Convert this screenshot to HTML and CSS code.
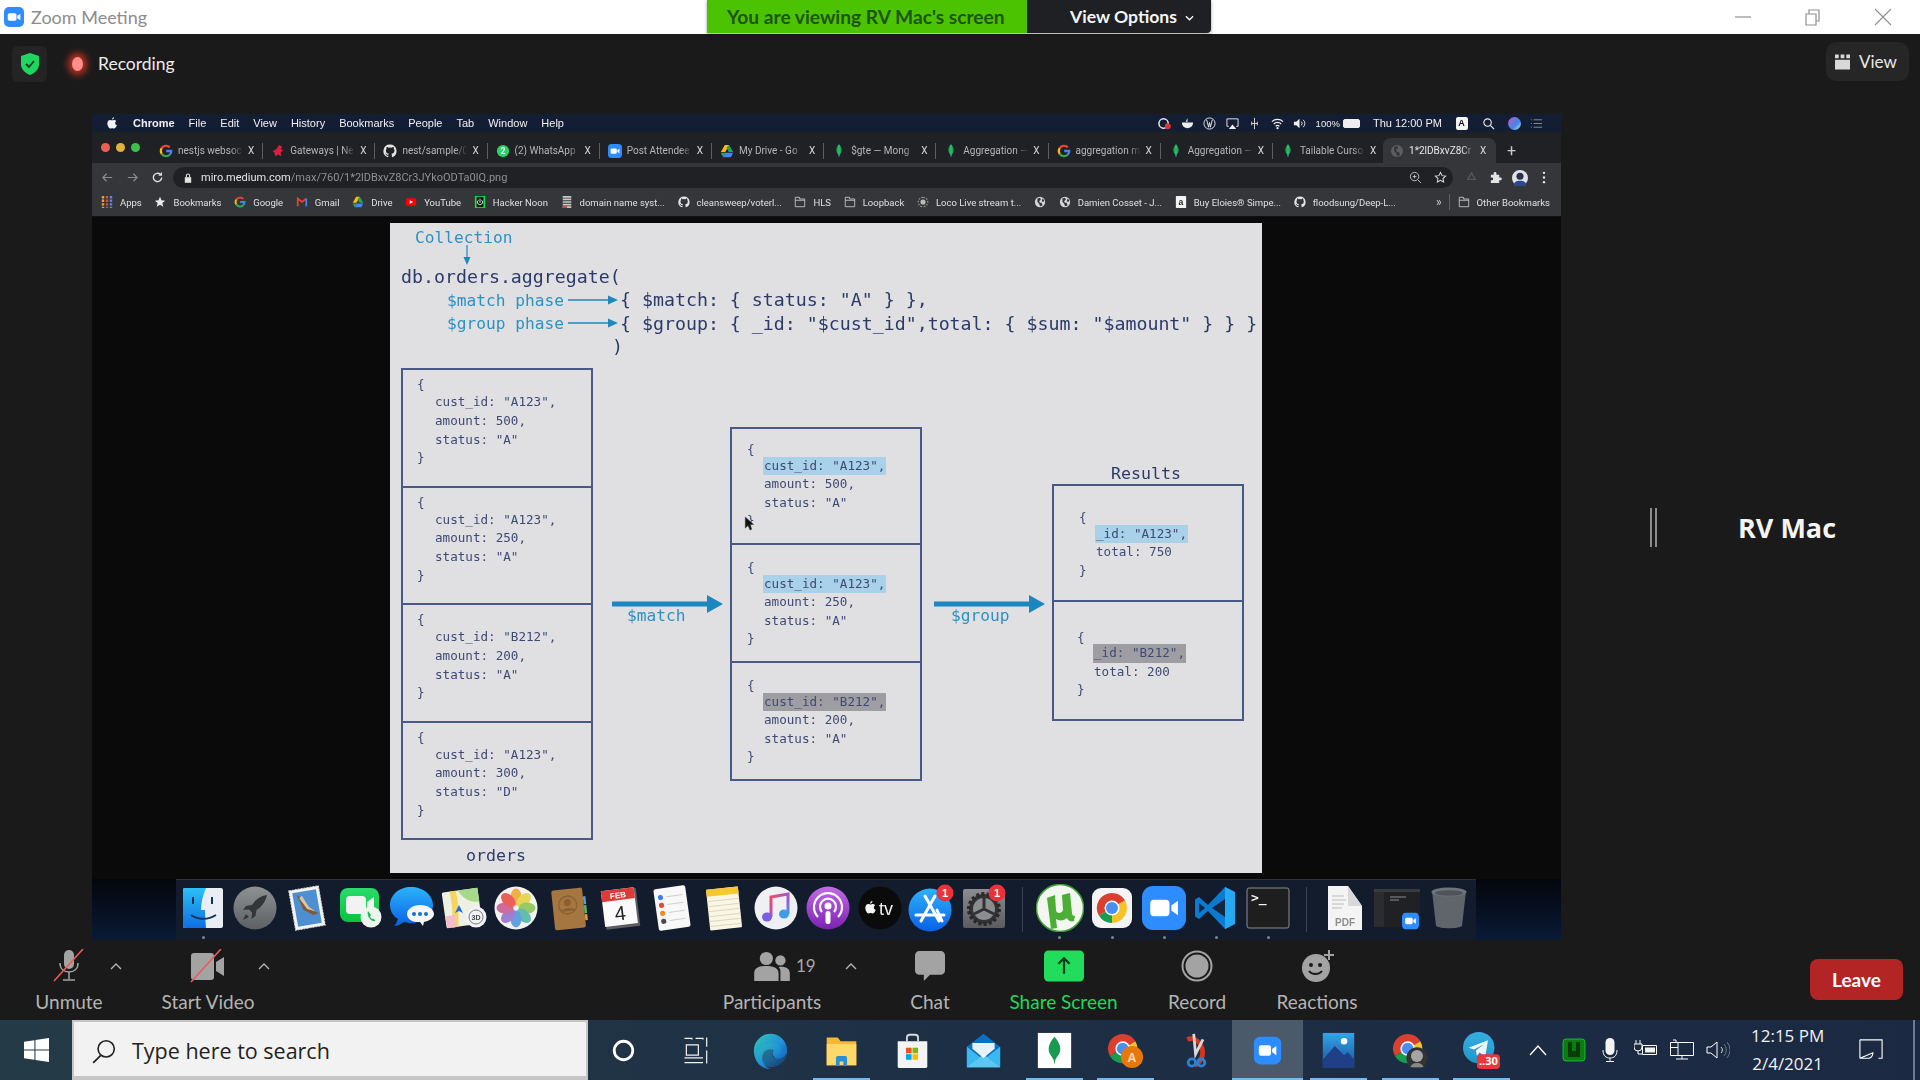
FILE: index.html
```html
<!DOCTYPE html>
<html lang="en">
<head>
<meta charset="utf-8">
<title>Zoom Meeting</title>
<link rel="stylesheet" href="styles.css">
</head>
<body>
<svg class="defs" aria-hidden="true">
  <defs>
    <linearGradient id="gFinder" x1="0" y1="0" x2="0" y2="1"><stop offset="0" stop-color="#2cc0f8"/><stop offset="1" stop-color="#0d6fe2"/></linearGradient>
    <linearGradient id="gLaunch" x1="0" y1="0" x2="0" y2="1"><stop offset="0" stop-color="#8e9293"/><stop offset="1" stop-color="#5c6062"/></linearGradient>
    <linearGradient id="gBlue" x1="0" y1="0" x2="0" y2="1"><stop offset="0" stop-color="#2cb3fb"/><stop offset="1" stop-color="#0b60e6"/></linearGradient>
    <linearGradient id="gGreen" x1="0" y1="0" x2="0" y2="1"><stop offset="0" stop-color="#28dc6a"/><stop offset="1" stop-color="#0ac240"/></linearGradient>
    <linearGradient id="gMusic" x1="0" y1="0" x2="1" y2="1"><stop offset="0" stop-color="#f4475f"/><stop offset=".6" stop-color="#a056d8"/><stop offset="1" stop-color="#3f9de8"/></linearGradient>
    <linearGradient id="gPod" x1="0" y1="0" x2="0" y2="1"><stop offset="0" stop-color="#c26be8"/><stop offset="1" stop-color="#7a22b0"/></linearGradient>
    <linearGradient id="gGrey" x1="0" y1="0" x2="0" y2="1"><stop offset="0" stop-color="#8b8d90"/><stop offset="1" stop-color="#5a5c60"/></linearGradient>
    <linearGradient id="gEdge" x1="0" y1="0" x2="1" y2="1"><stop offset="0" stop-color="#33c6b3"/><stop offset=".55" stop-color="#1f8fd8"/><stop offset="1" stop-color="#0c3f96"/></linearGradient>
    <linearGradient id="gPhoto" x1="0" y1="0" x2="0" y2="1"><stop offset="0" stop-color="#33a5e8"/><stop offset="1" stop-color="#1a4f9a"/></linearGradient>
    <linearGradient id="gTg" x1="0" y1="0" x2="0" y2="1"><stop offset="0" stop-color="#37aee2"/><stop offset="1" stop-color="#1e96c8"/></linearGradient>
    <symbol id="chrome" viewBox="0 0 48 48">
      <path d="M24 24L6.500 34A20 20 0 0 1 41.300 14Z" fill="#d9402f"/>
      <path d="M24 24L41.300 14A20 20 0 0 1 24 44Z" fill="#f5c228"/>
      <path d="M24 24L24 44A20 20 0 0 1 6.500 34Z" fill="#1a9c50"/>
      <circle cx="24" cy="24" r="10" fill="#fff"/><circle cx="24" cy="24" r="8" fill="#4a8ff0"/>
    </symbol>
    <symbol id="zoomcam" viewBox="0 0 24 24">
      <rect width="24" height="24" rx="6" fill="#2d8cff"/>
      <rect x="4.500" y="7.500" width="10.500" height="9" rx="2" fill="#fff"/><path d="M16 10.600l3.600-2.600v8l-3.600-2.600z" fill="#fff"/>
    </symbol>
    <symbol id="gfav" viewBox="0 0 16 16">
      <g fill="none" stroke-width="2.600">
        <path d="M3.100 4.800A6 6 0 0 1 12.300 3.800" stroke="#ea4335"/>
        <path d="M3.100 11.200A6 6 0 0 1 3.100 4.800" stroke="#fbbc05"/>
        <path d="M12.300 12.300A6 6 0 0 1 3.100 11.200" stroke="#34a853"/>
        <path d="M8.200 8H14A6 6 0 0 1 12.300 12.300" stroke="#4285f4"/>
      </g>
    </symbol>
    <symbol id="ghub" viewBox="0 0 16 16">
      <path fill="#e4e4e4" d="M8 .5a7.500 7.500 0 0 0-2.400 14.600c.4.100.5-.2.500-.4v-1.300c-2.100.4-2.600-1-2.600-1-.3-.9-.8-1.100-.8-1.100-.7-.5 0-.5 0-.5.800.1 1.200.8 1.200.8.700 1.200 1.800.8 2.300.6 0-.5.300-.9.500-1.100-1.700-.2-3.400-.8-3.400-3.700 0-.8.300-1.500.8-2-.1-.2-.3-1 .1-2 0 0 .6-.2 2.100.8a7 7 0 0 1 3.800 0c1.500-1 2.100-.8 2.100-.8.400 1 .2 1.800.1 2 .5.500.8 1.200.8 2 0 2.900-1.800 3.500-3.500 3.700.3.200.5.700.5 1.400v2.100c0 .2.100.5.500.4A7.500 7.500 0 0 0 8 .5z"/>
    </symbol>
    <symbol id="leaf" viewBox="0 0 16 16">
      <path fill="#13aa52" d="M8 0c2.200 3 3.400 5.200 3 8-.3 2.400-2 3.800-2.600 5L8 16l-.4-3C7 11.800 5.300 10.400 5 8 4.600 5.200 5.800 3 8 0z"/>
      <path d="M8 1v13.500" stroke="#b8c4c2" stroke-width=".5"/>
    </symbol>
    <symbol id="folder" viewBox="0 0 14 14">
      <path fill="none" stroke="#c8c9cc" stroke-width="1" d="M1.500 1.500h5v2h6v9h-11z"/><path stroke="#c8c9cc" d="M1.500 5h11"/>
    </symbol>
    <symbol id="globe" viewBox="0 0 14 14">
      <circle cx="7" cy="7" r="6" fill="#d6d7da"/><path fill="#35363a" d="M4 3l3-1 1 2-2 2 1 2 2 0 1 3-3 1-1-3-2-2zM10 3l2 2-1 2-2-1z"/>
    </symbol>
    <symbol id="caret" viewBox="0 0 12 7">
      <path d="M1 6l5-5 5 5" fill="none" stroke="#b4b4b4" stroke-width="1.400"/>
    </symbol>
  </defs>
</svg>

<header class="titlebar">
  <svg class="app-logo" viewBox="0 0 24 24"><use href="#zoomcam"/></svg>
  <span class="app-title">Zoom Meeting</span>
  <div class="banner">
    <div class="banner-msg">You are viewing RV Mac's screen</div>
    <div class="banner-opt">View Options
      <svg class="chev" viewBox="0 0 10 6"><path d="M1 1l4 4 4-4" fill="none" stroke="#fff" stroke-width="1.400"/></svg>
    </div>
  </div>
  <div class="winbtns">
    <svg class="winbtn" viewBox="0 0 20 20"><path d="M2 10h16" stroke="#8f8f8f" stroke-width="1.200"/></svg>
    <svg class="winbtn" viewBox="0 0 20 20"><path d="M3 7h10v11H3zM6 7V3h10v11h-3" fill="none" stroke="#8f8f8f" stroke-width="1.200"/></svg>
    <svg class="winbtn" viewBox="0 0 20 20"><path d="M2 2l16 16M18 2L2 18" stroke="#8f8f8f" stroke-width="1.100"/></svg>
  </div>
</header>

<main class="stage">
  <div class="stage-top">
    <div class="secure">
      <svg class="shield" viewBox="0 0 20 24"><path d="M10 1l9 3v8c0 5.500-4 9-9 11C5 21 1 17.500 1 12V4z" fill="#1fd65f"/><path d="M6 12l3 3 5-6" fill="none" stroke="#0d3a1c" stroke-width="1.800"/></svg>
    </div>
    <span class="rec-dot"></span>
    <span class="rec-label">Recording</span>
    <div class="view-btn">
      <svg class="view-ico" viewBox="0 0 16 16"><path fill="#d8d8d8" d="M0 0h4v4H0zM6 0h4v4H6zM12 0h4v4h-4zM0 5.500h16V16H0z"/></svg>
      View
    </div>
  </div>

  <div class="stage-body">
    <section class="share">
      <div class="mac-menu">
        <div class="mac-left">
          <svg class="apple" viewBox="0 0 14 16"><path fill="#f4f4f4" d="M10 0c0 1.700-1.300 3.200-3 3.200C7 1.500 8.400.2 10 0zM7 4.300c.8 0 1.600-.6 3-.6 1.100 0 2.200.5 3 1.600-2.500 1.500-2 5 .8 6-.6 1.500-2 4.500-3.600 4.500-1 0-1.500-.6-2.800-.6s-1.900.6-2.800.6C2.800 15.800.5 11.800.5 8.500.5 5.300 2.500 3.700 4.300 3.700c1.200 0 2 .6 2.700.6z"/></svg>
          <b>Chrome</b><span>File</span><span>Edit</span><span>View</span><span>History</span><span>Bookmarks</span><span>People</span><span>Tab</span><span>Window</span><span>Help</span>
        </div>
        <div class="mac-right">
          <svg class="mi" viewBox="0 0 14 14"><circle cx="6" cy="7" r="5" fill="none" stroke="#eee" stroke-width="1.600"/><circle cx="10.500" cy="10" r="3.200" fill="#e5352b"/></svg>
          <svg class="mi" viewBox="0 0 14 14"><path fill="#eee" d="M1 6h12c0 4-3 6-6 6S1 10 1 6zM7 1v4H5z"/></svg>
          <svg class="mi" viewBox="0 0 14 14"><circle cx="7" cy="7" r="6" fill="none" stroke="#eee"/><path d="M4 3l2 8 1-5 1 5 2-8" fill="none" stroke="#eee"/></svg>
          <svg class="mi" viewBox="0 0 14 14"><path fill="none" stroke="#eee" d="M3 10H1V2h12v8h-2"/><path fill="#eee" d="M7 8l4 5H3z"/></svg>
          <svg class="mi" viewBox="0 0 14 14"><path stroke="#ddd" d="M7 1v12M4 5v4M10 5v4M4 7h6"/></svg>
          <svg class="mi" viewBox="0 0 14 14"><path fill="none" stroke="#eee" stroke-width="1.300" d="M1 5a8.500 8.500 0 0 1 12 0M3 7.500a5.500 5.500 0 0 1 8 0M5 10a2.500 2.500 0 0 1 4 0"/><circle cx="7" cy="12" r="1.200" fill="#eee"/></svg>
          <svg class="mi" viewBox="0 0 14 14"><path fill="#eee" d="M1 5h2.500L7 2v10L3.500 9H1z"/><path fill="none" stroke="#eee" d="M9 5a3 3 0 0 1 0 4M11 3a6 6 0 0 1 0 8"/></svg>
          <span class="batt-pct">100%</span>
          <span class="batt"></span>
          <span class="mac-time">Thu 12:00 PM</span>
          <span class="kbd-a">A</span>
          <svg class="mi mi-gap" viewBox="0 0 14 14"><circle cx="6" cy="6" r="4" fill="none" stroke="#eee" stroke-width="1.200"/><path d="M9 9l4 4" stroke="#eee" stroke-width="1.300"/></svg>
          <span class="siri"></span>
          <svg class="mi" viewBox="0 0 14 14"><path stroke="#8a8f9c" d="M4 3h9M4 7h9M4 11h9M1 3h1M1 7h1M1 11h1"/></svg>
        </div>
      </div>

      <div class="chrome-win">
        <div class="tabstrip">
          <div class="lights"><i class="red"></i><i class="amber"></i><i class="green"></i></div>
          <div class="tab"><svg class="fav"><use href="#gfav"/></svg><span class="tab-title">nestjs websoc</span><span class="tab-x">X</span></div>
          <div class="tab"><svg class="fav" viewBox="0 0 16 16"><path fill="#d8203c" d="M9 1l4 2-2 3 3 1-3 3 1 4-4-2-3 2-1-4-2-2 4-2z"/></svg><span class="tab-title">Gateways | Ne</span><span class="tab-x">X</span></div>
          <div class="tab"><svg class="fav"><use href="#ghub"/></svg><span class="tab-title">nest/sample/0</span><span class="tab-x">X</span></div>
          <div class="tab"><svg class="fav" viewBox="0 0 16 16"><circle cx="8" cy="8" r="7" fill="#25d366"/><text x="8" y="11" class="fav-num">2</text></svg><span class="tab-title">(2) WhatsApp</span><span class="tab-x">X</span></div>
          <div class="tab"><svg class="fav" viewBox="0 0 24 24"><use href="#zoomcam"/></svg><span class="tab-title">Post Attendee</span><span class="tab-x">X</span></div>
          <div class="tab"><svg class="fav" viewBox="0 0 16 16"><path fill="#fbbc05" d="M5.500 1h5L6 9H1z"/><path fill="#34a853" d="M1 10h5l-2.500 5z"/><path fill="#4285f4" d="M6 10h9l-2.500 5h-9z"/><path fill="#1fa463" d="M10.500 1L15 9h-5L7.500 4z"/></svg><span class="tab-title">My Drive - Go</span><span class="tab-x">X</span></div>
          <div class="tab"><svg class="fav"><use href="#leaf"/></svg><span class="tab-title">$gte — Mong</span><span class="tab-x">X</span></div>
          <div class="tab"><svg class="fav"><use href="#leaf"/></svg><span class="tab-title">Aggregation —</span><span class="tab-x">X</span></div>
          <div class="tab"><svg class="fav"><use href="#gfav"/></svg><span class="tab-title">aggregation m</span><span class="tab-x">X</span></div>
          <div class="tab"><svg class="fav"><use href="#leaf"/></svg><span class="tab-title">Aggregation —</span><span class="tab-x">X</span></div>
          <div class="tab"><svg class="fav"><use href="#leaf"/></svg><span class="tab-title">Tailable Curso</span><span class="tab-x">X</span></div>
          <div class="tab tab-active"><svg class="fav" viewBox="0 0 14 14"><circle cx="7" cy="7" r="6" fill="#5c5d61"/><path fill="#35363a" d="M4 3l3-1 1 2-2 2 1 2 2 0 1 3-3 1-1-3-2-2z"/></svg><span class="tab-title">1*2lDBxvZ8Cr</span><span class="tab-x">X</span></div>
          <span class="tab-plus">+</span>
        </div>
        <div class="toolbar-c">
          <svg class="nav" viewBox="0 0 14 14"><path d="M12 7H2M6 3L2 7l4 4" fill="none" stroke="#8a8b8f" stroke-width="1.300"/></svg>
          <svg class="nav" viewBox="0 0 14 14"><path d="M2 7h10M8 3l4 4-4 4" fill="none" stroke="#8a8b8f" stroke-width="1.300"/></svg>
          <svg class="nav" viewBox="0 0 14 14"><path d="M11.500 7a4.500 4.500 0 1 1-1.300-3.200" fill="none" stroke="#dfe0e2" stroke-width="1.500"/><path d="M11.800 1v4h-4z" fill="#dfe0e2"/></svg>
          <div class="omnibox">
            <svg class="lock" viewBox="0 0 10 12"><path fill="#e4e4e4" d="M1 5h8v7H1z"/><path fill="none" stroke="#e4e4e4" stroke-width="1.300" d="M3 5V3a2 2 0 0 1 4 0v2"/></svg>
            <span class="url"><b>miro.medium.com</b>/max/760/1*2lDBxvZ8Cr3JYkoODTa0lQ.png</span>
            <svg class="nav omni-zoom" viewBox="0 0 14 14"><circle cx="6" cy="6" r="4.500" fill="none" stroke="#c6c7ca"/><path d="M9.500 9.500l3.500 3.500M4 6h4M6 4v4" stroke="#c6c7ca"/></svg>
            <svg class="nav" viewBox="0 0 14 14"><path d="M7 1.500l1.700 3.500 3.800.5-2.800 2.600.7 3.800L7 10l-3.400 1.900.7-3.800L1.500 5.500 5.300 5z" fill="none" stroke="#d6d7da" stroke-width="1.100"/></svg>
          </div>
          <svg class="nav ext-dim" viewBox="0 0 14 14"><path d="M7 2l4 7H3z" fill="none" stroke="#55565a" stroke-width="1.500"/></svg>
          <svg class="nav" viewBox="0 0 14 14"><path fill="#e4e4e4" d="M2 4h3V2.500a1.500 1.500 0 0 1 3 0V4h3v3h1.300a1.500 1.500 0 0 1 0 3H11v3H2v-3h1a1.500 1.500 0 0 0 0-3H2z"/></svg>
          <svg class="avatar" viewBox="0 0 18 18"><circle cx="9" cy="9" r="9" fill="#dde3ea"/><circle cx="9" cy="7" r="4" fill="#2c2f45"/><path fill="#2b4a8e" d="M2 18c0-5 3-6 7-6s7 1 7 6z"/></svg>
          <svg class="dots" viewBox="0 0 4 14"><circle cx="2" cy="2" r="1.300" fill="#e4e4e4"/><circle cx="2" cy="7" r="1.300" fill="#e4e4e4"/><circle cx="2" cy="12" r="1.300" fill="#e4e4e4"/></svg>
        </div>
        <div class="bookmarks">
          <span class="bm"><svg class="bm-ico" viewBox="0 0 12 12"><path stroke-width="2.400" stroke-dasharray="2.400 1.200" fill="none" stroke="#e8a23a" d="M2 0v12"/><path stroke-width="2.400" stroke-dasharray="2.400 1.200" fill="none" stroke="#dd4b39" d="M6 0v12"/><path stroke-width="2.400" stroke-dasharray="2.400 1.200" fill="none" stroke="#4a8cf0" d="M10 0v12"/></svg>Apps</span>
          <span class="bm"><svg class="bm-ico" viewBox="0 0 14 14"><path fill="#e8e8e8" d="M7 1l1.800 4 4.200.4-3.200 2.800 1 4.300L7 10.300l-3.800 2.200 1-4.300L1 5.400 5.200 5z"/></svg>Bookmarks</span>
          <span class="bm"><svg class="bm-ico"><use href="#gfav"/></svg>Google</span>
          <span class="bm"><svg class="bm-ico" viewBox="0 0 14 14"><path fill="none" stroke="#ea4335" stroke-width="2" d="M2 12V3l5 4 5-4"/><path fill="none" stroke="#4285f4" stroke-width="2" d="M12 3v9"/></svg>Gmail</span>
          <span class="bm"><svg class="bm-ico" viewBox="0 0 16 16"><path fill="#fbbc05" d="M5.500 1h5L6 9H1z"/><path fill="#34a853" d="M1 10h5l-2.500 5z"/><path fill="#4285f4" d="M6 10h9l-2.500 5h-9z"/><path fill="#1fa463" d="M10.500 1L15 9h-5L7.500 4z"/></svg>Drive</span>
          <span class="bm"><svg class="bm-ico" viewBox="0 0 14 14"><rect x="1" y="2.500" width="12" height="9" rx="2" fill="#f00"/><path fill="#fff" d="M5.500 5l4 2-4 2z"/></svg>YouTube</span>
          <span class="bm"><svg class="bm-ico" viewBox="0 0 12 14"><rect width="12" height="14" fill="#16e34a"/><rect x="2" y="1" width="8" height="12" fill="#111"/><path d="M6 3v5M4 5a3 3 0 1 0 4 0" fill="none" stroke="#fff"/></svg>Hacker Noon</span>
          <span class="bm"><svg class="bm-ico" viewBox="0 0 12 14"><path d="M1 1h10M1 4h10M1 7h10M1 10h10M1 13h10" stroke="#c9c9c9" stroke-width="2"/><path d="M1 13h5" stroke="#e33" stroke-width="2"/></svg>domain name syst...</span>
          <span class="bm"><svg class="bm-ico"><use href="#ghub"/></svg>cleansweep/voterl...</span>
          <span class="bm"><svg class="bm-ico"><use href="#folder"/></svg>HLS</span>
          <span class="bm"><svg class="bm-ico"><use href="#folder"/></svg>Loopback</span>
          <span class="bm"><svg class="bm-ico" viewBox="0 0 14 14"><circle cx="7" cy="7" r="3" fill="#b9bcb5"/><path stroke="#8e918a" stroke-width="1.500" stroke-dasharray="2 1.500" fill="none" d="M7 1.500a5.500 5.500 0 1 0 .01 0"/></svg>Loco Live stream t...</span>
          <span class="bm"><svg class="bm-ico"><use href="#globe"/></svg></span>
          <span class="bm"><svg class="bm-ico"><use href="#globe"/></svg>Damien Cosset - J...</span>
          <span class="bm"><svg class="bm-ico" viewBox="0 0 12 14"><rect width="12" height="14" rx="1" fill="#f4f4f4"/><text x="6" y="10" class="fav-a">a</text></svg>Buy Eloies® Simpe...</span>
          <span class="bm"><svg class="bm-ico"><use href="#ghub"/></svg>floodsung/Deep-L...</span>
          <div class="bm-end">
            <span class="bm-more">»</span>
            <span class="bm"><svg class="bm-ico"><use href="#folder"/></svg>Other Bookmarks</span>
          </div>
        </div>
      </div>

      <div class="viewport">
        <div class="sheet">
          <div class="collection">Collection</div>
          <svg class="col-arrow" viewBox="0 0 10 20"><path d="M5 0v14" stroke="#1e88bb" stroke-width="1.200"/><path d="M1.500 12h7L5 20z" fill="#1e88bb"/></svg>
          <div class="code">
            <div class="code-row">db.orders.aggregate(</div>
            <div class="code-row"><span class="phase">$match phase</span><svg class="phase-arrow" viewBox="0 0 50 10"><path d="M0 5h42" stroke="#1e88bb" stroke-width="1.400"/><path d="M40 .5L50 5 40 9.500z" fill="#1e88bb"/></svg><span class="stage-code">{ $match: { status: "A" } },</span></div>
            <div class="code-row"><span class="phase">$group phase</span><svg class="phase-arrow" viewBox="0 0 50 10"><path d="M0 5h42" stroke="#1e88bb" stroke-width="1.400"/><path d="M40 .5L50 5 40 9.500z" fill="#1e88bb"/></svg><span class="stage-code">{ $group: { _id: "$cust_id",total: { $sum: "$amount" } } }</span></div>
            <div class="code-row code-close">)</div>
          </div>

          <div class="col col-orders">
            <div class="doc"><div>{</div><div class="kv">cust_id: "A123",</div><div class="kv">amount: 500,</div><div class="kv">status: "A"</div><div>}</div></div>
            <div class="doc"><div>{</div><div class="kv">cust_id: "A123",</div><div class="kv">amount: 250,</div><div class="kv">status: "A"</div><div>}</div></div>
            <div class="doc"><div>{</div><div class="kv">cust_id: "B212",</div><div class="kv">amount: 200,</div><div class="kv">status: "A"</div><div>}</div></div>
            <div class="doc"><div>{</div><div class="kv">cust_id: "A123",</div><div class="kv">amount: 300,</div><div class="kv">status: "D"</div><div>}</div></div>
          </div>
          <div class="caption caption-orders">orders</div>

          <svg class="flow-arrow flow-match" viewBox="0 0 111 18"><path d="M0 6.500h96v5H0z" fill="#1b86bf"/><path d="M95 0l16 9-16 9z" fill="#1b86bf"/></svg>
          <div class="flow-label flow-label-match">$match</div>

          <div class="col col-matched">
            <div class="doc"><div>{</div><div class="kv"><span class="hl">cust_id: "A123",</span></div><div class="kv">amount: 500,</div><div class="kv">status: "A"</div><div>}</div></div>
            <div class="doc doc-mid"><div>{</div><div class="kv"><span class="hl">cust_id: "A123",</span></div><div class="kv">amount: 250,</div><div class="kv">status: "A"</div><div>}</div></div>
            <div class="doc"><div>{</div><div class="kv"><span class="hl hl-grey">cust_id: "B212",</span></div><div class="kv">amount: 200,</div><div class="kv">status: "A"</div><div>}</div></div>
          </div>
          <svg class="cursor" viewBox="0 0 10 16"><path d="M1 1v12l3-3 2 5 2-1-2-5h4z" fill="#111" stroke="#444" stroke-width=".5"/></svg>

          <svg class="flow-arrow flow-group" viewBox="0 0 111 18"><path d="M0 6.500h96v5H0z" fill="#1b86bf"/><path d="M95 0l16 9-16 9z" fill="#1b86bf"/></svg>
          <div class="flow-label flow-label-group">$group</div>

          <div class="caption caption-results">Results</div>
          <div class="col col-results">
            <div class="doc"><div>{</div><div class="kv"><span class="hl">_id: "A123",</span></div><div class="kv">total: 750</div><div>}</div></div>
            <div class="doc doc-shift"><div>{</div><div class="kv"><span class="hl hl-grey">_id: "B212",</span></div><div class="kv">total: 200</div><div>}</div></div>
          </div>
        </div>
      </div>

      <div class="dock-row">
        <div class="dock">
          <div class="slot"><svg class="di" viewBox="0 0 48 48"><rect x="4" y="4" width="40" height="40" rx="2" fill="#e8eef4"/><path d="M6 4h21c-3 7-5 14-5 22h4c0 6 .5 12 1 18H6a2 2 0 0 1-2-2V6a2 2 0 0 1 2-2z" fill="url(#gFinder)"/><path d="M14 13v7M33 13v7" stroke="#10335a" stroke-width="2"/><path d="M12 31c7 5 17 5 25 0" fill="none" stroke="#10335a" stroke-width="1.800"/></svg><i class="run"></i></div>
          <div class="slot"><svg class="di" viewBox="0 0 48 48"><circle cx="24" cy="24" r="21.500" fill="url(#gLaunch)"/><path d="M36 11c-7 1-12 5-15 10l-6 1-3 4 6-.5 3 3L20.500 35l4-3 1-6c5-3 9-8 10.500-15z" fill="#333639"/><path d="M15 30l-3 6 6-3z" fill="#333639"/></svg></div>
          <div class="slot"><svg class="di" viewBox="0 0 48 48"><g transform="rotate(-10 24 24)"><rect x="9" y="4" width="30" height="40" fill="#f4f4f4" stroke="#ddd" stroke-dasharray="2 1"/><rect x="12" y="7" width="24" height="34" fill="#4d8fd1"/><path d="M16 10l5 3 4 9 9 9-5 1-9-7-2-9z" fill="#7d5a3c"/><path d="M18 13l3-2 5 12 6 6-8-4z" fill="#d9c5a8"/></g></svg></div>
          <div class="slot"><svg class="di" viewBox="0 0 48 48"><rect x="5" y="4" width="39" height="34" rx="8" fill="url(#gGreen)"/><rect x="11" y="12" width="20" height="18" rx="4" fill="#f2f2f2"/><path d="M32 18l7-5v16l-7-5z" fill="#f2f2f2"/><circle cx="36" cy="33" r="10.500" fill="#eef3ee"/><path d="M33 27c-1 2 0 6 2 8s4 3 5.500 1.500l-2.500-2-1 .8c-1-.8-2-2.300-2-3.300l1-.8z" fill="#15b94c"/></svg></div>
          <div class="slot"><svg class="di" viewBox="0 0 48 48"><path d="M24 3C12 3 3 11 3 21c0 6 3 11 8 14-1 3-2 5-4 7 4 0 7-2 10-4 2 .5 5 1 7 1 12 0 22-8 22-18S36 3 24 3z" fill="url(#gBlue)"/><path d="M33 21c-7 0-13 4-13 9 0 4 4 8 10 8l3 0 3 4 1-4c5-1 10-4 10-8 0-5-6-9-14-9z" fill="#f4f6f8"/><circle cx="27" cy="30" r="2" fill="#1b6fd0"/><circle cx="33" cy="30" r="2" fill="#1b6fd0"/><circle cx="39" cy="30" r="2" fill="#1b6fd0"/></svg></div>
          <div class="slot"><svg class="di" viewBox="0 0 48 48"><g transform="rotate(-8 22 24)"><rect x="4" y="6" width="36" height="36" rx="1.500" fill="#eef0e4"/><path d="M20 6h20v14C30 20 24 14 20 6z" fill="#a7d98a"/><path d="M12 6h6c2 10 0 20-2 36h-6c2-12 3-24 2-36z" fill="#f6d55c"/><path d="M4 30h10v12H5z" fill="#f4bcc8"/><path d="M30 30h10v12H26z" fill="#bfe3f0"/></g><path d="M15 29l4-8 4 8-4-2z" fill="#1d6de0"/><circle cx="36" cy="33" r="10.500" fill="#f1f2f3"/><circle cx="36" cy="33" r="7" fill="none" stroke="#77797c"/><text x="36" y="36" class="dock-3d">3D</text></svg></div>
          <div class="slot"><svg class="di" viewBox="0 0 48 48"><circle cx="24" cy="24" r="21.500" fill="#f2f2f2"/><g opacity=".85"><ellipse cx="24" cy="13" rx="5.500" ry="8.500" fill="#f2a32c"/><ellipse cx="24" cy="13" rx="5.500" ry="8.500" fill="#e4d23a" transform="rotate(45 24 24)"/><ellipse cx="24" cy="13" rx="5.500" ry="8.500" fill="#88c44d" transform="rotate(90 24 24)"/><ellipse cx="24" cy="13" rx="5.500" ry="8.500" fill="#49b3a5" transform="rotate(135 24 24)"/><ellipse cx="24" cy="13" rx="5.500" ry="8.500" fill="#4b92dd" transform="rotate(180 24 24)"/><ellipse cx="24" cy="13" rx="5.500" ry="8.500" fill="#8e6dc9" transform="rotate(225 24 24)"/><ellipse cx="24" cy="13" rx="5.500" ry="8.500" fill="#c8548e" transform="rotate(270 24 24)"/><ellipse cx="24" cy="13" rx="5.500" ry="8.500" fill="#e8463f" transform="rotate(315 24 24)"/></g></svg></div>
          <div class="slot"><svg class="di" viewBox="0 0 48 48"><g transform="rotate(-6 24 24)"><rect x="9" y="5" width="31" height="40" rx="2" fill="#a5763f"/><rect x="40" y="14" width="2.500" height="8" fill="#5aa0d8"/><rect x="40" y="23" width="2.500" height="8" fill="#5ab56a"/><rect x="40" y="32" width="2.500" height="6" fill="#e0a03a"/><circle cx="24" cy="21" r="9" fill="none" stroke="#8a6030" stroke-width="1.300"/><circle cx="24" cy="18.500" r="3.500" fill="#8a6030"/><path d="M17 27c2-4 12-4 14 0" fill="#8a6030"/></g></svg></div>
          <div class="slot"><svg class="di" viewBox="0 0 48 48"><g transform="rotate(-7 24 24)"><rect x="8" y="6" width="34" height="38" fill="#5b5d62"/><rect x="7" y="5" width="33" height="36" fill="#fafafa"/><rect x="7" y="5" width="33" height="11" fill="#dd3b38"/><text x="23.500" y="14" class="dock-feb">FEB</text><text x="23.500" y="36" class="dock-day">4</text></g></svg></div>
          <div class="slot"><svg class="di" viewBox="0 0 48 48"><g transform="rotate(-8 24 24)"><rect x="8" y="3" width="32" height="42" rx="2" fill="#f8f8f8"/><circle cx="14" cy="12" r="2.600" fill="#3b7fe6"/><circle cx="14" cy="20" r="2.600" fill="#e9433b"/><circle cx="14" cy="28" r="2.600" fill="#ee8a2a"/><circle cx="14" cy="36" r="2.600" fill="#4a4a4c"/><path d="M20 12h16M20 20h16M20 28h16M20 36h16" stroke="#cfcfcf"/></g></svg></div>
          <div class="slot"><svg class="di" viewBox="0 0 48 48"><g transform="rotate(-6 24 24)"><rect x="8" y="4" width="32" height="41" rx="1" fill="#faf6e4"/><rect x="8" y="4" width="32" height="7" fill="#f6c82f"/><path d="M8 16h32M8 21h32M8 26h32M8 31h32M8 36h32M8 41h32" stroke="#dad6c2"/></g></svg></div>
          <div class="slot"><svg class="di" viewBox="0 0 48 48"><circle cx="24" cy="24" r="21.500" fill="#eff0f2"/><path d="M19 33V13l17-3v20" fill="none" stroke="url(#gMusic)" stroke-width="3"/><ellipse cx="15" cy="33" rx="5" ry="4.500" fill="#7a5fe0"/><ellipse cx="32" cy="30" rx="5" ry="4.500" fill="#3f9de8"/></svg></div>
          <div class="slot"><svg class="di" viewBox="0 0 48 48"><circle cx="24" cy="24" r="21.500" fill="url(#gPod)"/><path d="M14 33a14 14 0 1 1 20 0M18 28a8 8 0 1 1 12 0" fill="none" stroke="#fff" stroke-width="2.200"/><circle cx="24" cy="22" r="3.500" fill="#fff"/><rect x="21.500" y="27" width="5" height="13" rx="2.500" fill="#fff"/></svg></div>
          <div class="slot"><svg class="di" viewBox="0 0 48 48"><circle cx="24" cy="24" r="21.500" fill="#0b0b0c"/><path transform="translate(2 -1)" fill="#f4f4f4" d="M14.500 18c0 1.400-1 2.600-2.400 2.600 0-1.400 1-2.500 2.400-2.600zM12.500 21.500c.6 0 1.200-.5 2.300-.5.900 0 1.700.4 2.300 1.200-1.900 1.200-1.500 3.900.6 4.700-.5 1.200-1.500 3.500-2.800 3.500-.8 0-1.200-.5-2.200-.5s-1.400.5-2.200.5c-1.500 0-3.200-3.200-3.200-5.700 0-2.500 1.500-3.800 3-3.800.9 0 1.600.6 2.200.6z"/><text x="23" y="31" class="dock-tv">tv</text></svg></div>
          <div class="slot"><svg class="di" viewBox="0 0 48 48"><circle cx="22" cy="26" r="21.500" fill="url(#gBlue)"/><path d="M13 37l14-25M31 37L17 12M8 31h28M29 26l5 11" stroke="#fff" stroke-width="3" stroke-linecap="round" fill="none"/><circle cx="37" cy="9" r="8.500" fill="#e8333a"/><text x="37" y="13" class="dock-badge">1</text></svg></div>
          <div class="slot"><svg class="di" viewBox="0 0 48 48"><rect x="3" y="5" width="42" height="39" rx="2" fill="url(#gGrey)"/><circle cx="24" cy="25" r="15" fill="#333" stroke="#2a2a2a" stroke-width="4" stroke-dasharray="3 2.200"/><circle cx="24" cy="25" r="11" fill="#8b8d90"/><path d="M24 25V14M24 25l-10 5M24 25l10 5" stroke="#333" stroke-width="3"/><circle cx="37" cy="9" r="8.500" fill="#e8333a"/><text x="37" y="13" class="dock-badge">1</text></svg></div>
          <span class="dock-sep"></span>
          <div class="slot"><svg class="di" viewBox="0 0 48 48"><circle cx="24" cy="24" r="23.500" fill="#f3f7ef" stroke="#3f9e35" stroke-width="1.500"/><path d="M11 14l8-3 1 15c0 4 6 4 7 0l-1-15 8-2 2 20c0 2 1 3 3 3l-1 5c-3 1-6 0-7-3-3 3-8 3-11 1l1 9-6 1z" fill="#4cae35"/></svg><i class="run"></i></div>
          <div class="slot"><svg class="di" viewBox="0 0 48 48"><rect x="4" y="4" width="40" height="40" rx="9" fill="#f4f4f4"/><use href="#chrome" x="6" y="6" width="36" height="36"/></svg><i class="run"></i></div>
          <div class="slot"><svg class="di" viewBox="0 0 24 24"><use href="#zoomcam" x="1" y="1" width="22" height="22"/></svg><i class="run"></i></div>
          <div class="slot"><svg class="di" viewBox="0 0 48 48"><path d="M33 3L16 21 7 13l-4 2.500v17L7 35l9-8 17 18 10-5V8z" fill="#0b7ad1"/><path d="M33 3l10 5v32l-10 5z" fill="#24a9f2"/><path d="M33 15v18l-13-9z" fill="#13283f"/><path d="M7 19l6 5-6 5z" fill="#13283f"/></svg><i class="run"></i></div>
          <div class="slot"><svg class="di" viewBox="0 0 48 48"><rect x="3" y="4" width="42" height="40" rx="2" fill="#1e1e1e" stroke="#8a8c90"/><text x="7" y="18" class="dock-term">&gt;_</text></svg><i class="run"></i></div>
          <span class="dock-sep dock-sep-b"></span>
          <div class="slot"><svg class="di" viewBox="0 0 48 48"><path d="M8 2h20l14 20v24H8z" fill="#f4f4f4"/><path d="M28 2l14 20H28z" fill="#d8d8d8"/><path d="M12 12h12M12 16h14M12 20h12M12 24h10" stroke="#bbb"/><text x="25" y="42" class="dock-pdf">PDF</text></svg></div>
          <div class="slot"><svg class="di" viewBox="0 0 48 48"><rect x="1" y="5" width="46" height="38" fill="#202124"/><rect x="1" y="5" width="46" height="3" fill="#3a3b3f"/><path d="M17 13h16M17 16h9" stroke="#8e8f93"/><rect x="1" y="8" width="10" height="35" fill="#2b2c30"/><svg x="29" y="28" width="17" height="18" viewBox="0 0 24 24"><use href="#zoomcam"/></svg></svg></div>
          <div class="slot"><svg class="di" viewBox="0 0 48 48"><path d="M7 7h34l-4 35c-4 3-22 3-26 0z" fill="#5f656a"/><ellipse cx="24" cy="8" rx="17.500" ry="4.500" fill="#6f757a"/><ellipse cx="24" cy="9" rx="14" ry="2.800" fill="#4e5459"/></svg></div>
        </div>
      </div>
    </section>

    <aside class="speaker">
      <span class="speaker-bar"></span>
      <span class="speaker-name">RV Mac</span>
    </aside>
  </div>
</main>

<nav class="controls">
  <div class="ctl ctl-unmute">
    <svg class="ctl-ico" viewBox="0 0 36 34"><rect x="13" y="1" width="10" height="19" rx="5" fill="#a3a3a3"/><path d="M9 14c0 6 4 9 9 9s9-3 9-9M18 23v7M12 31h12" fill="none" stroke="#a3a3a3" stroke-width="1.500"/><path d="M3 32L32 0" stroke="#ec5a5a" stroke-width="1.600"/></svg>
    <span>Unmute</span>
  </div>
  <svg class="caret"><use href="#caret"/></svg>
  <div class="ctl ctl-video">
    <svg class="ctl-ico" viewBox="0 0 40 34"><path fill="#a3a3a3" d="M3 7a3 3 0 0 1 3-3h17a3 3 0 0 1 3 3v21a3 3 0 0 1-3 3H6a3 3 0 0 1-3-3zM28 13l8-5v19l-8-5z"/><path d="M3 33L33 0" stroke="#ec5a5a" stroke-width="1.600"/></svg>
    <span>Start Video</span>
  </div>
  <svg class="caret"><use href="#caret"/></svg>
  <div class="ctl ctl-part">
    <div class="part-row">
      <svg class="ctl-ico part-ico" viewBox="0 0 38 32"><g fill="#a3a3a3"><circle cx="13" cy="8" r="7"/><circle cx="28" cy="10" r="5.500"/><path d="M0 32v-8c0-6 5-8 13-8s13 2 13 8v8zM28 32v-10c0-3-1-4-2-5 7-1 12 1 12 7v8z"/></g></svg>
      <span class="part-num">19</span>
    </div>
    <span>Participants</span>
  </div>
  <svg class="caret caret-part"><use href="#caret"/></svg>
  <div class="ctl ctl-chat">
    <svg class="ctl-ico chat-ico" viewBox="0 0 34 34"><path fill="#a3a3a3" d="M5 0h24a5 5 0 0 1 5 5v17a5 5 0 0 1-5 5H17l-7 7 0-7H5a5 5 0 0 1-5-5V5a5 5 0 0 1 5-5z"/></svg>
    <span>Chat</span>
  </div>
  <div class="ctl ctl-share">
    <svg class="ctl-ico" viewBox="0 0 36 28"><rect width="36" height="28" rx="4" fill="#22dc5c"/><path d="M18 21V8M13 12l5-5 5 5" fill="none" stroke="#083a1a" stroke-width="2"/></svg>
    <span>Share Screen</span>
  </div>
  <div class="ctl ctl-record">
    <svg class="ctl-ico" viewBox="0 0 34 34"><circle cx="17" cy="17" r="14.500" fill="none" stroke="#a3a3a3" stroke-width="2"/><circle cx="17" cy="17" r="11.500" fill="#a3a3a3"/></svg>
    <span>Record</span>
  </div>
  <div class="ctl ctl-react">
    <svg class="ctl-ico" viewBox="0 0 34 34"><circle cx="14" cy="19" r="14" fill="#a3a3a3"/><circle cx="9" cy="16" r="2" fill="#1a1a1a"/><circle cx="18" cy="16" r="2" fill="#1a1a1a"/><path d="M7 22c3 4 10 4 13 0" fill="none" stroke="#1a1a1a" stroke-width="2"/><path d="M27 1v10M22 6h10" stroke="#a3a3a3" stroke-width="2"/></svg>
    <span>Reactions</span>
  </div>
  <div class="leave">Leave</div>
</nav>

<footer class="taskbar">
  <div class="start"><svg class="win-logo" viewBox="0 0 24 24"><path fill="#fff" d="M0 4l10-1.400v8.800H0zM11 2.400L24 .5v10.900H11zM0 12.500h10v8.900L0 20zM11 12.500h13v11L11 21.600z"/></svg></div>
  <div class="search">
    <svg class="search-ico" viewBox="0 0 24 24"><circle cx="14" cy="10" r="7.500" fill="none" stroke="#222" stroke-width="1.500"/><path d="M9 16L2 23" stroke="#222" stroke-width="1.600"/></svg>
    <span>Type here to search</span>
  </div>
  <div class="tb-slot"><svg class="ti" viewBox="0 0 40 40"><circle cx="20" cy="20" r="10" fill="none" stroke="#fff" stroke-width="3"/></svg></div>
  <div class="tb-slot tb-view"><svg class="ti" viewBox="0 0 40 40"><path d="M7 7h8v1M19 7h8v1M7 33h20M7 28h20M9 14h13v11H9zM31 6v10M31 20v14" fill="none" stroke="#f2f2f2" stroke-width="1.300"/></svg></div>
  <div class="tb-slot tb-edge"><svg class="ti" viewBox="0 0 40 40"><path d="M20 2a18 18 0 0 1 18 18c0 6-5 9-9 9s-7-2-7-5c0-2 1-3 2-4-4-3-13-1-13 8 0 7 6 11 9 12C9 40 2 31 2 20 2 10 10 2 20 2z" fill="url(#gEdge)"/><path d="M5 26C6 15 19 9 28 14c3 2 4 5 3 8 4-1 7-4 7-2 0 12-9 18-18 18-3 0-6-1-8-3-5-2-7-5-7-9z" fill="url(#gEdge)" opacity=".55"/><path d="M22 22a7 7 0 0 0 7 7c4 0 7-2 9-6-1 5-5 6-9 6-5 0-8-3-7-7z" fill="#12315e"/></svg></div>
  <div class="tb-slot run-bar"><svg class="ti" viewBox="0 0 40 40"><path d="M4 6h12l3 4h17v26H4z" fill="#f7b731"/><path d="M4 13h32v23H4z" fill="#ffd86a"/><path d="M14 28v8h4v-4h4v4h4v-8a2 2 0 0 0-2-2h-8a2 2 0 0 0-2 2z" fill="#2a8fd8"/></svg></div>
  <div class="tb-slot"><svg class="ti" viewBox="0 0 40 40"><path d="M14 10V6a3 3 0 0 1 3-3h6a3 3 0 0 1 3 3v4" fill="none" stroke="#d8d8d8" stroke-width="2"/><path d="M4 10h32v27a2 2 0 0 1-2 2H6a2 2 0 0 1-2-2z" fill="#f4f4f4"/><path fill="#f25022" d="M13 17h6v6h-6z"/><path fill="#7fba00" d="M20 17h6v6h-6z"/><path fill="#00a4ef" d="M13 24h6v6h-6z"/><path fill="#ffb900" d="M20 24h6v6h-6z"/></svg></div>
  <div class="tb-slot"><svg class="ti" viewBox="0 0 40 40"><path d="M20 2L38 16v22H2V16z" fill="#0f6fbf"/><path d="M2 16l18 14 18-14v22H2z" fill="#3bb8ee"/><path d="M2 38l18-14 18 14z" fill="#5cc8f2"/><path d="M8 12h24v6l-12 10L8 18z" fill="#fff" opacity=".9"/></svg></div>
  <div class="tb-slot run-bar"><svg class="ti" viewBox="0 0 40 40"><rect x="2" y="1" width="36" height="38" fill="#fff"/><path d="M20 5c5 6 7 10 6 16-1 4-4 6-5 9l-1 5-1-5c-1-3-4-5-5-9-1-6 1-10 6-16z" fill="#1a9a50"/></svg></div>
  <div class="tb-slot run-bar"><svg class="ti" viewBox="0 0 40 40"><use href="#chrome" x="-2" y="-1" width="38" height="38"/><circle cx="27" cy="27" r="12" fill="#e8780c"/><text x="27" y="32" class="ti-a">A</text></svg></div>
  <div class="tb-slot"><svg class="ti" viewBox="2 0 40 40"><path d="M12 8a12 14 0 1 1 8 28" fill="none" stroke="#d4371c" stroke-width="5"/><path d="M19 2l2 22 8-16" fill="none" stroke="#d8d8d8" stroke-width="3"/><circle cx="17" cy="33" r="4" fill="none" stroke="#2a82d6" stroke-width="3"/><circle cx="27" cy="33" r="4" fill="none" stroke="#2a82d6" stroke-width="3"/></svg></div>
  <div class="tb-slot tb-active"><svg class="ti" viewBox="0 0 24 24"><use href="#zoomcam" x="3" y="0" width="18" height="24"/></svg></div>
  <div class="tb-slot run-bar"><svg class="ti" viewBox="0 0 40 40"><rect x="3" y="1" width="34" height="38" fill="url(#gPhoto)"/><circle cx="26" cy="10" r="3.500" fill="#fff"/><path d="M3 30l13-15 10 10 4-3 7 8v9H3z" fill="#1f3f86"/></svg></div>
  <div class="tb-slot run-bar"><svg class="ti" viewBox="0 0 40 40"><use href="#chrome" x="-2" y="-1" width="38" height="38"/><circle cx="27" cy="28" r="11.500" fill="#333"/><circle cx="27" cy="26" r="6.500" fill="#a5a5a5"/><path d="M20 38c1-6 13-6 14 0z" fill="#888"/></svg></div>
  <div class="tb-slot run-bar"><svg class="ti" viewBox="0 0 40 40"><circle cx="17" cy="17" r="17" fill="url(#gTg)"/><path d="M6 17l21-8-3 18-6-5-3 4-1-6 9-7-11 6z" fill="#eef7fc"/><rect x="15" y="24" width="25" height="16" rx="4" fill="#e8383a"/><text x="27.500" y="36" class="ti-badge">..30</text></svg></div>
  <div class="tray">
    <svg class="tray-caret" viewBox="0 0 18 12"><path d="M1 11l8-9 8 9" fill="none" stroke="#fff" stroke-width="1.300"/></svg>
    <svg class="tray-i" viewBox="0 0 24 24"><rect x="1" y="1" width="22" height="22" rx="3" fill="#0d7a12" stroke="#0e3" stroke-width=".7"/><path d="M6 4v15h12V4h-4v9h-4V4z" fill="#063c08"/></svg>
    <svg class="tray-i" viewBox="0 0 24 24"><rect x="7.500" y="0" width="9" height="17" rx="4.500" fill="#f4f4f4"/><path d="M5 12c0 6 3 8 7 8s7-2 7-8M12 20v3M8 23.500h8" fill="none" stroke="#f4f4f4"/></svg>
    <svg class="tray-i" viewBox="0 0 24 24"><path d="M2 2v4M6 2v4M0 6h8v3a4 4 0 0 1-8 0zM4 13v3h4" fill="none" stroke="#fff"/><path d="M8.500 7.500h14v9h-14z" fill="none" stroke="#fff"/><path d="M11 9.500h10v5H11z" fill="#f2f2f2"/></svg>
    <svg class="tray-i" viewBox="0 0 24 24"><path d="M.5 4.500h23v13H.5zM8 4.500v13M.5 9.500H8M6 21h12M12 17.500V21M3 2h3v3" fill="none" stroke="#fff"/></svg>
    <svg class="tray-i" viewBox="0 0 24 24"><path d="M1 9h4l6-5v16l-6-5H1z" fill="none" stroke="#fff"/><path d="M15 9a4 4 0 0 1 0 6" fill="none" stroke="#ddd"/><path d="M18 6a9 9 0 0 1 0 12M21 4a12 12 0 0 1 0 16" fill="none" stroke="#6e7686"/></svg>
  </div>
  <div class="clock"><span>12:15 PM</span><span>2/4/2021</span></div>
  <svg class="notify" viewBox="0 0 26 24"><path d="M1 1h24v20h-4M15 15c0 3-1 5-4 6 0 0-3 0-3 0l-2-0-2 0H1z" fill="none" stroke="#fff" stroke-width="1.200"/><path d="M1 1v20" stroke="#fff" stroke-width="1.200"/></svg>
  <span class="show-desktop"></span>
</footer>
</body>
</html>
```
FILE: styles.css
```css
* { box-sizing: border-box; }
html, body { margin: 0; padding: 0; }
body {
  width: 1920px;
  height: 1080px;
  overflow: hidden;
  display: flex;
  flex-direction: column;
  background: #1a1a1a;
  font-family: "Open Sans", "Liberation Sans", sans-serif;
}
.defs { display: block; width: 0; height: 0; overflow: hidden; }
svg { display: block; flex: none; }

/* Title bar */
.titlebar {
  position: relative;
  height: 34px;
  flex: none;
  background: #fff;
  display: flex;
  align-items: center;
  padding-left: 4px;
}
.app-logo { width: 20px; height: 22px; }
.app-title { margin-left: 7px; font-size: 18px; color: #8c8c8c; font-family: Lato, sans-serif; }
.banner {
  position: absolute;
  left: 707px;
  top: 0;
  height: 33px;
  display: flex;
  box-shadow: 0 1px 3px rgba(0,0,0,.4);
  font-weight: 700;
  font-family: Lato, sans-serif;
}
.banner-msg {
  width: 320px;
  background: #4cc300;
  color: #1f5412;
  font-size: 19.2px;
  padding: 5px 0 0 20px;
  line-height: 23px;
}
.banner-opt {
  width: 184px;
  background: #1e2023;
  color: #f4f4f4;
  font-size: 17.6px;
  display: flex;
  align-items: center;
  padding-left: 43px;
  border-radius: 0 0 4px 0;
}
.chev { width: 9px; height: 6px; margin-left: 8px; margin-top: 2px; }
.winbtns { margin-left: auto; display: flex; gap: 50px; margin-right: 27px; }
.winbtn { width: 20px; height: 20px; }

/* Stage */
.stage { flex: none; height: 906px; background: #1a1a1a; display: flex; flex-direction: column; }
.stage-top { height: 80px; flex: none; display: flex; align-items: flex-start; padding: 8px 11px 0 12px; }
.secure {
  width: 35px; height: 36px; margin-top: 4px;
  background: #242424; border-radius: 6px;
  display: flex; align-items: center; justify-content: center;
}
.shield { width: 20px; height: 24px; }
.rec-dot {
  width: 11px; height: 14px; margin: 15px 0 0 25px;
  border-radius: 50%;
  background: #ff8f88;
  box-shadow: 0 0 7px 4px #b83424;
}
.rec-label { margin: 11px 0 0 15px; font-size: 17.5px; line-height: 22px; color: #ececec; font-family: Lato, sans-serif; }
.view-btn {
  margin-left: auto;
  width: 83px; height: 39px;
  background: #262626; border-radius: 10px;
  display: flex; align-items: center; justify-content: flex-start; gap: 9px;
  padding-left: 9px;
  color: #e8e8e8; font-size: 17px; font-family: Lato, sans-serif;
}
.view-ico { width: 15px; height: 16px; }
.stage-body { flex: 1; display: flex; min-height: 0; }

/* Shared mac screen */
.share {
  width: 1469px;
  margin-left: 92px;
  display: flex;
  flex-direction: column;
  background: #0a0a0a;
  filter: blur(.3px);
}
.mac-menu {
  height: 18px; flex: none;
  background: #131d33;
  display: flex; align-items: center; justify-content: space-between;
  font: 11px/17px "Liberation Sans", sans-serif;
  color: #eef0f4;
}
.mac-left { display: flex; align-items: center; gap: 14px; padding-left: 15px; }
.mac-left b { margin-left: 2px; }
.apple { width: 10px; height: 12px; }
.mac-right { display: flex; align-items: center; padding-right: 18px; gap: 9.5px; }
.mi { width: 13px; height: 13px; }
.mi-gap { margin-left: 5px; }
.batt-pct { font-size: 9.5px; margin-right: -6px; }
.batt { width: 17px; height: 9px; border: 1px solid #eee; background: #eee; border-radius: 2px; }
.mac-time { margin-left: 3px; }
.kbd-a { width: 12px; height: 13px; margin-left: 4px; background: #f4f4f4; color: #111; font-size: 9px; line-height: 13px; text-align: center; border-radius: 2px; font-weight: 700; }
.siri { width: 13px; height: 13px; border-radius: 50%; background: linear-gradient(135deg, #c55ad0, #3d86e8 60%, #cfe6f0); margin-left: 3px; }
.chrome-win { flex: none; background: #35363a; }
.tabstrip { height: 31px; background: #202124; display: flex; align-items: flex-end; }
.lights { display: flex; gap: 6px; padding: 0 11px 0 9px; align-self: center; }
.lights i { width: 9px; height: 9px; border-radius: 50%; }
.lights .red { background: #ec5f57; }
.lights .amber { background: #e2b33c; }
.lights .green { background: #3ebe4d; }
.tab {
  width: 112.2px; height: 25px; flex: none;
  display: flex; align-items: center; padding: 0 6px 0 8px;
  font: 10px Roboto, sans-serif; color: #b5b6b9;
  background: linear-gradient(#5c5d61, #5c5d61) right center / 1px 16px no-repeat;
}
.fav { width: 14px; height: 14px; }
.tab-title {
  width: 68px; margin-left: 5px; white-space: nowrap; overflow: hidden;
  -webkit-mask-image: linear-gradient(90deg, #000 78%, transparent 96%);
  mask-image: linear-gradient(90deg, #000 78%, transparent 96%);
}
.tab-x { margin-left: 2px; font-size: 10px; color: #d8d8d8; }
.tab-active {
  width: 113px; margin-left: -2px;
  background: #35363a; border-radius: 8px 8px 0 0;
  color: #e6e7e9; padding-left: 7px;
}
.tab-active .tab-x { margin-left: 3px; }
.tab-plus { font: 16px/25px Roboto, sans-serif; color: #c9cacd; margin-left: 11px; }
.toolbar-c { height: 27px; display: flex; align-items: center; padding: 2px 0 0 9px; }
.nav { width: 13px; height: 13px; }
.toolbar-c > .nav { margin-right: 12px; }
.toolbar-c > .ext-dim { margin: 0 11px 0 12px; }
.omnibox {
  width: 1280px; height: 21px; margin-left: -3px;
  background: #202124; border-radius: 11px;
  display: flex; align-items: center; padding: 0 6px 0 11px;
  font: 11px Roboto, sans-serif; color: #8f9094;
}
.lock { width: 8px; height: 10px; }
.url { margin-left: 9px; flex: 1; }
.url b { font-weight: 400; color: #e6e7e9; }
.omni-zoom { margin-right: 12px; }
.avatar { width: 16px; height: 18px; margin: 0 14px 0 -2px; }
.dots { width: 4px; height: 13px; }
.bookmarks {
  height: 26px;
  display: flex; align-items: center; gap: 12.7px;
  padding: 0 11px 2px 9px;
  font: 9.5px Roboto, sans-serif; color: #dfe0e2;
  white-space: nowrap;
}
.bm { display: flex; align-items: center; gap: 7px; }
.bm-ico { width: 12px; height: 12px; }
.bm-end { margin-left: auto; display: flex; align-items: center; }
.bm-more { padding-right: 7px; border-right: 1px solid #5c5d61; margin-right: 8px; font-size: 12px; line-height: 16px; color: #c9cacd; }

.viewport { flex: 1; min-height: 0; padding: 6px 0 0 298px; border-top: 1px solid #111; }
.sheet {
  position: relative;
  width: 872px; height: 650px;
  background: #e0e0e3;
  color: #2c3a68;
  font-family: "DejaVu Sans Mono", monospace;
}
.collection, .phase, .flow-label { color: #2d92c0; font-size: 16.2px; }
.collection { position: absolute; left: 25px; top: 4px; line-height: 22px; }
.col-arrow { position: absolute; left: 72px; top: 22px; width: 10px; height: 20px; }
.code { position: absolute; left: 11px; top: 42px; font-size: 18.25px; }
.code-row { height: 23.4px; line-height: 23.4px; display: flex; align-items: center; white-space: pre; }
.phase { width: 121px; margin-left: 46px; padding-top: 1px; }
.phase-arrow { width: 50px; height: 10px; }
.stage-code { margin-left: 2px; }
.code-close { padding-left: 211px; }
.col {
  position: absolute; width: 191.5px;
  border: 2px solid #4a5888;
  display: flex; flex-direction: column;
  font-size: 12.6px; line-height: 18.6px; color: #3f4a74;
  white-space: pre;
}
.doc { flex: 1; padding: 6px 0 0 14px; }
.doc > div:first-child { height: 17.4px; }
.doc + .doc { border-top: 2px solid #4a5888; }
.kv { padding-left: 18px; }
.col-orders { left: 11px; top: 145px; height: 472px; }
.col-matched { left: 340px; top: 204px; height: 354px; }
.col-matched .doc { padding: 12px 0 0 15px; }
.col-matched .doc + .doc { padding-top: 14px; }
.col-matched .doc-mid { padding-top: 16px; }
.col-matched .doc > div:first-child, .col-results .doc > div:first-child { height: 15.5px; }
.col-matched .kv { padding-left: 17px; }
.col-results { left: 662px; top: 261px; height: 237px; }
.col-results .doc { padding: 23px 0 0 25px; }
.col-results .kv { padding-left: 17px; }
.col-results .doc-shift { padding: 27px 0 0 23px; }
.hl { background: #a9d1ea; padding: 0 1px; margin-left: -1px; display: inline-block; }
.hl-grey { background: #9d9da2; }
.caption { position: absolute; font-size: 16.6px; line-height: 22px; }
.caption-orders { left: 76px; top: 622px; }
.caption-results { left: 721px; top: 240px; }
.flow-arrow { position: absolute; width: 111px; height: 18px; top: 372px; }
.flow-match { left: 222px; }
.flow-group { left: 544px; }
.flow-label { position: absolute; top: 382px; line-height: 22px; }
.flow-label-match { left: 237px; }
.flow-label-group { left: 561px; }
.cursor { position: absolute; left: 354px; top: 293px; width: 10px; height: 15px; }

/* Dock */
.dock-row {
  height: 61px; flex: none;
  background: linear-gradient(180deg, #04060c, #0a1a36);
  padding-left: 84px;
  margin-top: auto;
}
.dock {
  width: 1300px; height: 61px;
  background: #131c2c;
  border-top: 1px solid #2a3242;
  display: flex;
  padding-left: 1px;
}
.slot { width: 52.1px; flex: none; display: flex; flex-direction: column; align-items: center; padding-top: 4px; }
.di { width: 48px; height: 48px; }
.run { width: 3px; height: 3px; border-radius: 50%; background: #7d8594; margin-top: 4px; }
.dock-sep { width: 23.4px; flex: none; margin: 7px 0 8px; background: linear-gradient(#3a4252, #3a4252) center / 1px 100% no-repeat; }
.dock-sep-b { width: 24px; }
.dock-3d { font: 700 7px "Liberation Sans", sans-serif; fill: #444; text-anchor: middle; }
.dock-feb { font: 700 8px "Liberation Sans", sans-serif; fill: #fff; text-anchor: middle; }
.dock-day { font: 20px "Liberation Sans", sans-serif; fill: #222; text-anchor: middle; }
.dock-tv { font: 18px "Liberation Sans", sans-serif; fill: #f4f4f4; }
.dock-badge { font: 700 11px "Liberation Sans", sans-serif; fill: #fff; text-anchor: middle; }
.dock-term { font: 700 13px "DejaVu Sans Mono", monospace; fill: #f4f4f4; }
.dock-pdf { font: 700 10px "Liberation Sans", sans-serif; fill: #8e8e8e; text-anchor: middle; }
.fav-num { font: 700 10px Roboto, sans-serif; fill: #fff; text-anchor: middle; }
.fav-a { font: 700 10px "Liberation Sans", sans-serif; fill: #222; text-anchor: middle; }

/* Active speaker strip */
.speaker { flex: 1; display: flex; align-items: center; padding-left: 89px; }
.speaker-bar { width: 7px; height: 39px; border-left: 2px solid #8c8c8c; border-right: 2px solid #8c8c8c; }
.speaker-name { margin-left: 81px; font-size: 27px; font-weight: 700; color: #f4f4f4; white-space: nowrap; }

/* Meeting controls */
.controls {
  height: 80px; flex: none;
  background: #1a1a1a;
  display: flex; align-items: flex-start;
  padding-left: 31px;
  color: #b4b4b4;
  font: 19px Lato, sans-serif;
}
.ctl { display: flex; flex-direction: column; align-items: center; padding-top: 9px; }
.ctl > span { margin-top: 9px; line-height: 20px; white-space: nowrap; }
.ctl-ico { height: 34px; width: 40px; }
.chat-ico { width: 30px; height: 30px; margin: 2px 0; }
.ctl-unmute { width: 76px; }
.ctl-video { width: 94px; margin-left: 36px; }
.ctl-part { width: 96px; margin-left: 451px; }
.part-row { display: flex; align-items: center; height: 34px; position: relative; }
.part-ico { width: 36px; height: 30px; }
.part-num { position: absolute; left: 42px; top: 7px; font-size: 17px; line-height: 20px; color: #a8a8a8; }
.caret { width: 12px; height: 7px; margin: 23px 3px 0; }
.caret-part { margin-left: 25px; }
.ctl-chat { width: 50px; margin-left: 45px; }
.ctl-share { width: 107px; margin-left: 55px; color: #23d65c; }
.ctl-record { width: 64px; margin-left: 48px; }
.ctl-react { width: 80px; margin-left: 48px; }
.ctl-react .ctl-ico { margin-left: 3px; }
.leave {
  margin: 19px 0 0 453px;
  width: 93px; height: 41px;
  background: #b32525; border-radius: 8px;
  color: #fff; font-weight: 700; font-size: 19px; line-height: 41px; text-align: center;
}

/* Taskbar */
.taskbar {
  flex: none; height: 60px;
  background: linear-gradient(90deg, #243b47, #1d2f45 50%, #1b2942);
  display: flex; align-items: center;
  color: #fff;
}
.start { width: 72px; display: flex; justify-content: center; }
.win-logo { width: 25px; height: 26px; }
.search {
  width: 516px; height: 60px;
  background: #f2f2f2;
  border: 2px solid #c6c6c6;
  border-bottom-width: 4px;
  display: flex; align-items: center;
  padding: 3px 0 0 17px;
  color: #222; font-size: 21.5px;
}
.search-ico { width: 26px; height: 26px; }
.search span { margin-left: 15px; }
.tb-slot {
  width: 71.06px; height: 60px; flex: none;
  display: flex; align-items: center; justify-content: center;
}
.tb-view { margin-left: 2px; }
.tb-edge { margin-left: 3px; }
.ti { width: 37px; height: 37px; }
.run-bar { background: linear-gradient(#76b9ed, #76b9ed) center bottom / 57px 2px no-repeat; }
.tb-active { background: #4b5a6b linear-gradient(#76b9ed, #76b9ed) center bottom / 100% 2px no-repeat; }
.ti-a { font: 700 13px "Open Sans", sans-serif; fill: #f8d8b0; text-anchor: middle; }
.ti-badge { font: 700 12px "Open Sans", sans-serif; fill: #fff; text-anchor: middle; }
.tray { display: flex; align-items: center; gap: 12px; margin-left: 12px; }
.tray-caret { width: 18px; height: 12px; margin-right: 3px; }
.tray-i { width: 24px; height: 24px; }
.clock {
  width: 84px; margin-left: 16px;
  display: flex; flex-direction: column; align-items: center; gap: 6px;
  font-size: 17px; line-height: 22px; color: #f2f2f2;
  white-space: nowrap;
}
.notify { width: 24px; height: 24px; margin-left: 29px; }
.show-desktop { width: 2px; height: 60px; background: #6e7a8c; margin-left: 30px; }
```
